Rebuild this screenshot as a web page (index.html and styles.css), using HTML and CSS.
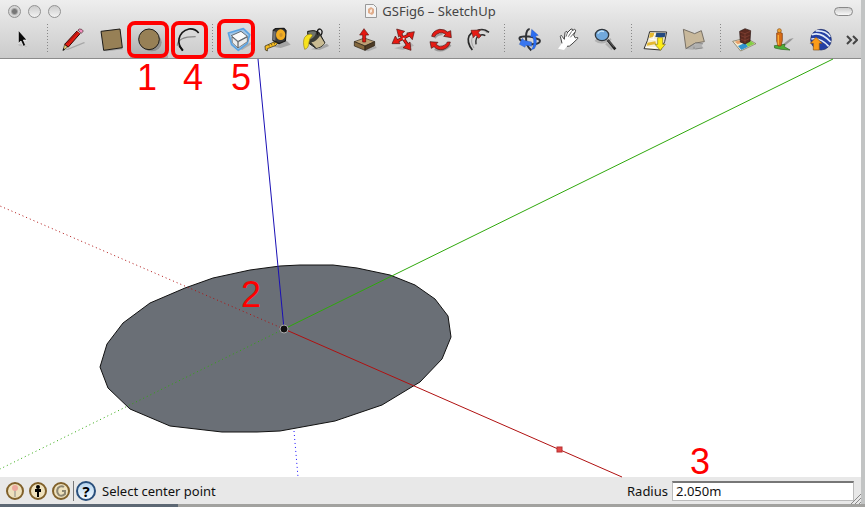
FILE: index.html
```html
<!DOCTYPE html>
<html lang="en">
<head>
<meta charset="utf-8">
<title>GSFig6 – SketchUp</title>
<link rel="stylesheet" href="styles.css">
</head>
<body>
<div class="window">
  <header class="titlebar">
    <div class="lights">
      <button class="light light-edited" aria-label="Close"></button>
      <button class="light" aria-label="Minimize"></button>
      <button class="light" aria-label="Zoom window"></button>
    </div>
    <h1 class="title">
      <svg class="doc-icon" viewBox="0 0 12 14" aria-hidden="true"><path d="M.5.5h8l3 3v10H.5z" fill="#f4f4f4" stroke="#999"/><path d="M3 5l3-2 3 2v4l-2 2-4-2z" fill="#e0ad8c"/><path d="M5 6l2-1v3l-2 1z" fill="#fbe9dc"/></svg>
      GSFig6 – SketchUp
    </h1>
    <button class="pill" aria-label="Toggle toolbar"></button>
  </header>

  <nav class="toolbar" aria-label="Tools">
    <button class="tool" aria-label="Select"><svg viewBox="21 75 90 90"><path d="M54 133h18l10 8-25-3z" fill="#aaa" opacity=".5"/><path d="M55 91v39l8-7 7 16 7-3-7-16h11z" fill="#0a0a0a" stroke="#fff" stroke-width="2"/></svg></button>
    <span class="sep"></span>
    <button class="tool" aria-label="Line"><svg viewBox="174 75 90 90"><path d="M192 151l60-25 3 3-50 20z" fill="#888" opacity=".6"/><path d="M189 151l5-18 9 8z" fill="#e7cc75" stroke="#332" stroke-width="2"/><path d="M188 152l2-8 5 5z" fill="#111"/><path d="M194 133l38-41 9 8-36 41z" fill="#e31b12" stroke="#350807" stroke-width="3"/><path d="M202 130l34-36" stroke="#8b0906" stroke-width="2"/><path d="M234 90l4-3q8-1 12 6l-6 7z" fill="#f28ec0" stroke="#422" stroke-width="2"/><path d="M231 91l11 9" stroke="#ccc" stroke-width="3"/></svg></button>
    <button class="tool" aria-label="Rectangle"><svg viewBox="288 75 90 90"><path d="M312 150l54-7 3 5-50 6z" fill="#777" opacity=".5"/><path d="M303 94l57-7 7 56-56 8z" fill="#978056" stroke="#1d1b18" stroke-width="3"/></svg></button>
    <button class="tool tool-active" aria-label="Circle"><svg viewBox="402 75 90 90"><ellipse cx="455" cy="127" rx="30" ry="27" fill="#555" opacity=".4"/><circle cx="447" cy="118" r="31" fill="#978056" stroke="#1d1b18" stroke-width="3"/></svg><span class="mark mark-a"></span><span class="mark-number">1</span></button>
    <button class="tool" aria-label="Arc"><svg viewBox="516 75 90 90"><path d="M532 137q0-27 55-27" fill="none" stroke="#888" stroke-width="4"/><path d="M549 151q-15-14-12-34 5-24 30-30 18-2 29 12" fill="none" stroke="#151515" stroke-width="5"/><path d="M538 137l10 15" stroke="#111" stroke-width="5"/></svg><span class="mark mark-b"></span><span class="mark-number mark-number-b">4</span></button>
    <span class="sep"></span>
    <button class="tool" aria-label="Make component"><svg viewBox="39 75 90 90"><path d="M90 146l32-20v8l-26 16z" fill="#888" opacity=".5"/><path d="M55 99l45-13 19 18-7 26-27 21-20-17z" fill="#a3c6e6" stroke="#5ba3e2" stroke-width="5" stroke-linejoin="round"/><path d="M66 111l18 15v18l-17-16zM112 111l-28 15v18l28-19z" fill="#ececec" stroke="#555" stroke-width="2"/><path d="M64 107l29-13 19 15-28 15z" fill="#fafafa" stroke="#333" stroke-width="2"/></svg><span class="mark mark-c"></span><span class="mark-number mark-number-c">5</span></button>
    <button class="tool" aria-label="Tape measure"><svg viewBox="153 75 90 90"><path d="M190 140l40-18 12 12-30 10z" fill="#777" opacity=".5"/><path d="M190 91l6-5 26-1 6 7-2 31-19 8-18-10z" fill="#3b3b3b" stroke="#1a1a1a" stroke-width="4" stroke-linejoin="round"/><path d="M190 92l7 3-1 27-7-2z" fill="#777"/><ellipse cx="212" cy="104" rx="14" ry="16" fill="#f2ad22"/><ellipse cx="213" cy="105" rx="5" ry="6" fill="#d0942a"/><path d="M165 138l27-12 11 3-5 7-26 10v7l-6-3z" fill="#f8bd20" stroke="#221d0c" stroke-width="2"/><path d="M176 134l2 5M184 131l2 5M192 128l2 5" stroke="#222" stroke-width="2"/></svg></button>
    <button class="tool" aria-label="Paint bucket"><svg viewBox="267 75 90 90"><path d="M303 148l48-17 6 7-28 12z" fill="#777" opacity=".5"/><path d="M293 94q20-6 34 3l18 32q-10 14-27 16l-24-17z" fill="#3a3b35" stroke="#1d1e1b" stroke-width="3"/><path d="M304 127q16-3 26-20l14 23q-10 12-25 14z" fill="#c9bb92"/><path d="M294 97q12-6 24-2 0 15-17 23z" fill="#6f746d"/><path d="M323 104q-4-17 7-17 11 5 3 19" fill="none" stroke="#171717" stroke-width="4"/><path d="M304 102q-14 0-20 10-7 14 0 36 12-2 13-22 2-12 10-19z" fill="#f7e21d" stroke="#93811c" stroke-width="2"/></svg></button>
    <span class="sep"></span>
    <button class="tool" aria-label="Push/Pull"><svg viewBox="420 75 90 90"><path d="M465 152l32-14 3 6-25 10z" fill="#777" opacity=".4"/><path d="M433 125l30-11 31 11-29 13z" fill="#bba074" stroke="#33291c" stroke-width="2"/><path d="M433 125l32 13v13l-32-13z" fill="#85693f" stroke="#251c11" stroke-width="2"/><path d="M465 138l29-13v12l-29 14z" fill="#4d3b25" stroke="#251c11" stroke-width="2"/><path d="M458 126v-21h-9l13-19 14 19h-9v21z" fill="#e3160f" stroke="#63100d" stroke-width="2"/></svg></button>
    <button class="tool" aria-label="Move"><svg viewBox="534 75 90 90"><path d="M553 145l51-16 8 8-33 13z" fill="#777" opacity=".35"/><path d="M568 97l28 43M557 126l45-24" stroke="#4e1713" stroke-width="10"/><g fill="#e71912" stroke="#4e1713" stroke-width="2" stroke-linejoin="round"><path d="M560 87l24 7-18 17zM613 95l-6 24-17-20zM546 131l10-23 14 23zM603 151l-24-8 21-17z"/></g><path d="M568 97l28 43M557 126l45-24" stroke="#e71912" stroke-width="6"/><circle cx="581" cy="116" r="3" fill="#ddd"/></svg></button>
    <button class="tool" aria-label="Rotate"><svg viewBox="18 75 90 90"><path d="M44 114q10-12 24-11M44 147q24 13 48-12" fill="none" stroke="#777" stroke-width="6" opacity=".6"/><path d="M35 109q3-17 24-21 15-1 24 8l9-4 2 21-23-4 6-6q-9-7-19-4-11 3-15 12z" fill="#e51b15" stroke="#451312" stroke-width="2"/><path d="M91 126q-4 18-23 23-16 2-26-9l-8 5-4-20 24 2-6 6q9 9 19 5 12-3 15-12z" fill="#e51b15" stroke="#451312" stroke-width="2"/></svg></button>
    <button class="tool" aria-label="Offset"><svg viewBox="132 75 90 90"><path d="M157 150q-18-23-10-42l10-12M173 91q19-7 34 6" fill="none" stroke="#292929" stroke-width="5"/><path d="M168 133q-3-22 11-27 9-4 17 1" fill="none" stroke="#292929" stroke-width="4"/><path d="M180 90q14 0 22 9M162 144q-12-18-4-34" fill="none" stroke="#888" stroke-width="2"/><path d="M153 91l28-1-6 8 8 10-7 7-9-10-7 8z" fill="#e51b15" stroke="#651b17" stroke-width="2"/></svg></button>
    <span class="sep"></span>
    <button class="tool" aria-label="Orbit"><svg viewBox="285 75 90 90"><path d="M329 87q-10 1-11 22-1 29 16 42M298 113q22-11 60 6 6 8-8 12-30 6-50-12-5-7 5-9" fill="none" stroke="#303236" stroke-width="6"/><path d="M335 88l20 18-8 2q6 27-4 38l-9 3q12-19 4-39l-6 2z" fill="#2b6df0" stroke="#234c9e"/><path d="M298 133l9-18 5 6 23 5v13l-18-3-2 6z" fill="#3876ef" stroke="#234c9e"/></svg></button>
    <button class="tool" aria-label="Pan"><svg viewBox="399 75 90 90"><path d="M414 146l12-16-5-21q2-7 6 1l6 8 2-20q5-9 7 0l11-11q6-2 4 5l7-4q5 1 2 7l-5 10 5 9q10-4 7 2l-17 16q-8 9-15 7l-9 11z" fill="#fff"/><path d="M426 130l-5-21q2-7 6 1l6 8 2-20q5-9 7 0l11-11q6-2 4 5l7-4q5 1 2 7l-5 10 5 9q10-4 7 2l-17 16q-8 9-15 7" fill="none" stroke="#444" stroke-width="3" stroke-linejoin="round"/><path d="M438 110l5-14M445 110l10-16M451 112l13-15" stroke="#292929" stroke-width="2"/></svg></button>
    <button class="tool" aria-label="Zoom"><svg viewBox="513 75 90 90"><path d="M526 120q19 15 47-3M558 130l19 18" stroke="#888" stroke-width="7" fill="none" opacity=".45"/><path d="M563 120l23 28" stroke="#222" stroke-width="8"/><path d="M564 121l19 20" stroke="#999" stroke-width="2"/><ellipse cx="546" cy="105" rx="20" ry="17" fill="#72a9dc" stroke="#30363c" stroke-width="4"/><path d="M533 101q7-11 19-6" fill="none" stroke="#c7e5fa" stroke-width="4"/></svg></button>
    <span class="sep"></span>
    <button class="tool" aria-label="Get current view"><svg viewBox="36 75 90 90"><path d="M59 95l51 1-6 29-12 25-50-4 10-24z" fill="#f5eed7" stroke="#333" stroke-width="3" stroke-linejoin="round"/><path d="M79 98l28 1-3 13-28-1z" fill="#244a80"/><path d="M60 98l16 1-3 10-15 5zM52 128l24-4 2 8-27 5z" fill="#e5b92f"/><path d="M58 117l20 3M75 98l-6 20M48 142l30 1" stroke="#fff" stroke-width="3"/><path d="M83 113h15v20h8l-15 18-16-18h8z" fill="#ffed16" stroke="#827915" stroke-width="2"/></svg></button>
    <button class="tool" aria-label="Toggle terrain"><svg viewBox="150 75 90 90"><path d="M167 147l26-14 26-2-4 6 6 8-34 4z" fill="#999" opacity=".6"/><path d="M160 88l34 13 20-9 9 33-27 4-28 17z" fill="#c8b89b" stroke="#777066" stroke-width="3" stroke-linejoin="round"/><path d="M167 147l29-18 23 2M192 147v-7M217 144l-21 3" fill="none" stroke="#777" stroke-width="2"/></svg></button>
    <span class="sep"></span>
    <button class="tool" aria-label="Photo textures"><svg viewBox="303 75 90 90"><path d="M308 124l40-10 30 17-46 22z" fill="#f3edd3" stroke="#6c644b" stroke-width="2"/><path d="M314 125l14-4 7 7-12 5z" fill="#e9a26c"/><path d="M324 138l22-10 8 12-20 10z" fill="#2f94d0"/><path d="M346 128l15-6 13 9-20 9z" fill="#84ce46"/><path d="M329 94l16-8 17 6-2 32-15 8-14-6z" fill="#5b2a20" stroke="#291410" stroke-width="2"/><path d="M330 96l15 5 16-7M345 101v28M332 107l13 5 14-6M332 117l13 5 13-6" fill="none" stroke="#8a4537" stroke-width="2"/></svg></button>
    <button class="tool" aria-label="Street view"><svg viewBox="417 75 90 90"><path d="M455 136l24-19 12-3-9 9-20 16z" fill="#888" opacity=".8"/><path d="M433 137l32-4-2 7 17 10-27-2-19-4z" fill="#4fae36" stroke="#28601f" stroke-width="2"/><path d="M440 99q9-5 17 1v22l-4 16h-9l-4-15z" fill="#d96c15" stroke="#76370d" stroke-width="2"/><path d="M445 105v29" stroke="#fbae34" stroke-width="4"/><circle cx="448" cy="92" r="6" fill="#f0a534" stroke="#8b4f16" stroke-width="2"/></svg></button>
    <button class="tool" aria-label="Google Earth"><svg viewBox="531 75 90 90"><circle cx="573" cy="119" r="31" fill="#2440a4" stroke="#18265e" stroke-width="2"/><path d="M546 104q26-10 56 22M557 93q28-3 44 17M544 117q28-5 52 22" fill="none" stroke="#e2ebf8" stroke-width="5"/><path d="M558 112l18 18h-8v20h-18v-20h-9z" fill="#fb9b18" stroke="#82511a" stroke-width="2"/></svg></button>
    <button class="more" aria-label="More tools"><svg viewBox="0 0 12 10"><path d="M1 1l4 4-4 4M7 1l4 4-4 4" fill="none" stroke="#444" stroke-width="2"/></svg></button>
  </nav>

  <main class="scene">
    <svg class="drawing" viewBox="0 59 861 418" preserveAspectRatio="xMinYMin slice" role="img" aria-label="Circle drawn on the ground plane">
      <path class="face" d="M100 367l7-23 16-21 27-20 35-15 28-10 37-8 30-4 20-1h33l24 3 33 7 25 10 20 14 13 17 3 21-9 22-22 23-38 23-47 16-55 10-23 1-35 0-52-6-40-17-22-21z"/>
      <g class="axes">
        <path class="blue" d="M258 59l26 270"/>
        <path class="blue dotted" d="M294 431l4 46"/>
        <path class="green" d="M284 329L833 59"/>
        <path class="green dotted" d="M284 329L0 469"/>
        <path class="red dotted" d="M284 329L0 206"/>
        <path class="red" d="M284 329l338 148"/>
      </g>
      <circle class="origin" cx="284" cy="329" r="4"/>
      <rect class="handle" x="557" y="447" width="5" height="5"/>
      <text class="number" x="241" y="307">2</text>
      <text class="number" x="690" y="474">3</text>
    </svg>
  </main>

  <footer class="status">
    <div class="status-icons">
      <button class="round" aria-label="Location"><svg viewBox="0 0 20 20"><circle class="coin" cx="10" cy="10" r="8"/><path d="M10 9v7" stroke="#888"/><circle cx="10" cy="7" r="3" fill="#eda79c"/></svg></button>
      <button class="round" aria-label="Credits"><svg viewBox="0 0 20 20"><circle class="coin" cx="10" cy="10" r="8"/><circle cx="10" cy="6" r="2"/><path d="M7 8h6v3h-2v5H9v-5H7z"/></svg></button>
      <button class="round" aria-label="Account"><svg viewBox="0 0 20 20"><circle class="coin" cx="10" cy="10" r="8"/><path d="M13 6q-3-2-6 1-2 4 1 7 3 2 6-1v-3h-3" fill="none" stroke="#8d8672" stroke-width="2"/></svg></button>
    </div>
    <button class="round help" aria-label="Help">?</button>
    <span class="hint">Select center point</span>
    <label class="radius-label" for="radius">Radius</label>
    <input class="radius" id="radius" type="text" value="2.050m">
    <svg class="grip" viewBox="0 0 10 10" aria-hidden="true"><path d="M0 10L10 0M4 10l6-6M8 10l2-2" stroke="#888"/></svg>
  </footer>
</div>
</body>
</html>
```
FILE: styles.css
```css
* {
  box-sizing: border-box;
}

body {
  margin: 0;
  background: linear-gradient(to right, #5d6874 178px, #a2a29f 178px);
  font-family: "Noto Sans", "Open Sans", sans-serif;
  font-size: 13px;
  color: #111;
}

button {
  padding: 0;
  border: 0;
  background: none;
  font: inherit;
}

svg {
  display: block;
}

.window {
  display: flex;
  flex-direction: column;
  height: calc(100vh - 3px);
  margin-right: 4px;
  background: #e8e8e8;
  box-shadow: 4px 0 0 #c2c4c4;
}

.titlebar {
  display: grid;
  grid-template-columns: 1fr auto 1fr;
  align-items: center;
  height: 22px;
  padding: 0 8px;
  background: linear-gradient(#eee, #e0e0e0);
}

.lights {
  display: flex;
  gap: 7px;
}

.light {
  width: 13px;
  height: 13px;
  border: 1px solid #929292;
  border-radius: 50%;
  background: linear-gradient(#ccc, #f2f2f2);
}

.light-edited {
  background: radial-gradient(circle, #777 2px, #d5d5d5 4px);
}

.title {
  display: flex;
  align-items: center;
  gap: 5px;
  margin: 0;
  font-size: 13px;
  font-weight: 400;
  line-height: 20px;
  color: #444;
}

.doc-icon {
  width: 12px;
  height: 14px;
}

.pill {
  justify-self: end;
  width: 19px;
  height: 9px;
  border: 1px solid #888;
  border-radius: 5px;
  background: linear-gradient(#ccc, #f8f8f8);
}

.toolbar {
  display: flex;
  flex: none;
  height: 37px;
  padding-left: 3px;
  border-bottom: 1px solid #8c8c8c;
  background: linear-gradient(#e0e0e0, #cbcbcb);
}

.tool {
  position: relative;
  flex: none;
  width: 38px;
  height: 36px;
}

.tool svg {
  width: 30px;
  height: 30px;
  margin: 0 auto;
}

.tool-active {
  background: linear-gradient(#ddd, #aaa);
}

.sep {
  flex: none;
  width: 1px;
  margin: 2px 6px 4px;
  background: repeating-linear-gradient(#888 0 1px, transparent 1px 3px);
}

.mark {
  position: absolute;
  z-index: 1;
  top: -1px;
  left: -3px;
  width: 42px;
  height: 37px;
  border: 4px solid #f00;
  border-radius: 8px;
}

.mark-b {
  left: 3px;
  width: 37px;
  height: 38px;
}

.mark-c {
  top: -3px;
  left: -2px;
  width: 38px;
  height: 39px;
}

.mark-number {
  position: absolute;
  z-index: 1;
  top: 36px;
  left: 7px;
  font-family: "Liberation Sans", sans-serif;
  font-size: 36px;
  line-height: 40px;
  color: #f00;
}

.mark-number-b {
  left: 15px;
}

.mark-number-c {
  left: 12px;
}

.more {
  margin-left: auto;
  padding-right: 3px;
}

.more svg {
  width: 12px;
  height: 10px;
}

.scene {
  flex: 1;
  min-height: 0;
  background: #fff;
}

.drawing {
  width: 100%;
  height: 100%;
  overflow: visible;
}

.face {
  fill: #6a6f76;
  stroke: #111;
}

.axes {
  fill: none;
}

.blue {
  stroke: #1a10b5;
}

.green {
  stroke: #2fa80c;
}

.red {
  stroke: #b01010;
}

.dotted {
  stroke-dasharray: 1 3;
}

.blue.dotted {
  stroke: #1a10ff;
}

.origin {
  fill: #111;
  stroke: #aaa;
}

.handle {
  fill: #e34848;
  stroke: #b83030;
}

.number {
  fill: #f00;
  font-family: "Liberation Sans", sans-serif;
  font-size: 36px;
}

.status {
  display: flex;
  flex: none;
  align-items: center;
  height: 27px;
  padding-left: 5px;
}

.status-icons {
  display: flex;
  gap: 3px;
  padding-right: 2px;
  border-right: 1px solid #777;
}

.round,
.round svg {
  width: 20px;
  height: 20px;
}

.coin {
  fill: #eee1bd;
  stroke: #80602a;
  stroke-width: 2px;
}

.help {
  margin: 0 6px 0 2px;
  border: 2px solid #294f7c;
  border-radius: 50%;
  background: linear-gradient(#b7d5ef, #f2faff);
  font-size: 15px;
  font-weight: 700;
  line-height: 16px;
}

.radius-label {
  margin-left: auto;
  margin-right: 4px;
}

.radius {
  width: 182px;
  height: 20px;
  padding: 0 3px;
  border: 1px solid #bbb;
  border-top: 2px solid #777;
  background: #fff;
  font: inherit;
  color: #111;
}

.grip {
  align-self: flex-end;
  width: 10px;
  height: 10px;
  margin-left: -3px;
}
```
